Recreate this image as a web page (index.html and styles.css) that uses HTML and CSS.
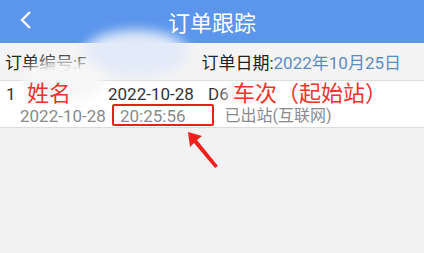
FILE: index.html
```html
<html>

<head>
    <title>订单跟踪</title>
    <link rel="stylesheet" href="styles.css">
</head>

<body>

    <div class="topbar">
        <svg class="back" width="14" height="20" viewBox="0 0 14 20">
            <path d="M11 2 L3 10 L11 18" fill="none" stroke="#fff" stroke-width="2.4" />
        </svg>
        <div class="title">订单跟踪</div>
    </div>

    <div class="orderinfo">
        <span>订单编号:F</span>
        <span>订单日期:<span class="date">2022年10月25日</span></span>
    </div>

    <div class="item">
        <div class="line1">
            <span class="idx">1</span>
            <span class="mark name">姓名</span>
            <span class="day">2022-10-28</span>
            <span class="train">D6</span>
            <span class="mark">车次（起始站）</span>
        </div>
        <div class="line2">
            <span class="day2">2022-10-28</span>
            <span class="time">20:25:56</span>
            <span class="state">已出站(互联网)</span>
        </div>
    </div>

    <!-- mosaic blur + annotations -->
    <div class="blur b1"></div>
    <div class="blur b2"></div>
    <div class="blur b3"></div>
    <div class="box"></div>
    <svg class="arrow" width="50" height="50" viewBox="0 0 50 50">
        <path d="M6 4 L20 8 L15 12 L36 38 L33 40 L12 15 L8 19 Z" fill="#f0201c" />
    </svg>

</body>

</html>
```

FILE: styles.css
```css
body {
    margin: 0;
    background: #f2f2f2;
    font-family: Roboto, "Noto Sans CJK SC", sans-serif;
    width: 424px;
    height: 253px;
    overflow: hidden;
    position: relative;
}

.topbar {
    height: 43px;
    background: #5b95ec;
    display: flex;
    align-items: center;
    justify-content: center;
    position: relative;
}

.back {
    position: absolute;
    left: 19px;
    top: 10px;
}

.title {
    color: #fff;
    font-size: 22px;
    margin-top: -2px;
}

.orderinfo {
    height: 37px;
    background: #f4f4f4;
    display: flex;
    justify-content: space-between;
    align-items: center;
    padding: 0 23px 0 5px;
    font-size: 17px;
    color: #222;
    border-bottom: 1px solid #dcdcdc;
}

.date {
    color: #5a8cc2;
}

.item {
    background: #fff;
    border-bottom: 1px solid #dcdcdc;
    height: 46px;
}

.line1 {
    display: flex;
    align-items: center;
    height: 25px;
    font-size: 17px;
    line-height: 20px;
    color: #333;
}

.idx {
    margin-left: 6px;
    width: 21px;
}

.mark {
    color: #f03228;
    font-size: 22px;
    line-height: 22px;
    position: relative;
    z-index: 2;
}

.name {
    width: 81px;
}

.day {
    width: 100px;
}

.train {
    width: 25px;
}

.line2 {
    display: flex;
    align-items: center;
    height: 20px;
    font-size: 17px;
    line-height: 20px;
    color: #8a8a8a;
    padding-left: 20px;
}

.day2 {
    width: 100px;
}

.state {
    margin-left: 39px;
    font-size: 16px;
}

.blur {
    position: absolute;
    background: #f4f6fa;
    border-radius: 50%;
    filter: blur(6px);
    z-index: 1;
}

.b1 {
    left: 84px;
    top: 30px;
    width: 104px;
    height: 46px;
    background: #e2eaf8;
}

.b2 {
    left: 22px;
    top: 60px;
    width: 84px;
    height: 40px;
    background: #f6f6f6;
}

.b3 {
    left: 224px;
    top: 84px;
    width: 18px;
    height: 18px;
    background: #f2f2f2;
}

.box {
    position: absolute;
    left: 112px;
    top: 104px;
    width: 98px;
    height: 18px;
    border: 2px solid #e8201c;
    border-radius: 2px;
    z-index: 2;
}

.arrow {
    position: absolute;
    left: 182px;
    top: 128px;
    z-index: 2;
}
```
